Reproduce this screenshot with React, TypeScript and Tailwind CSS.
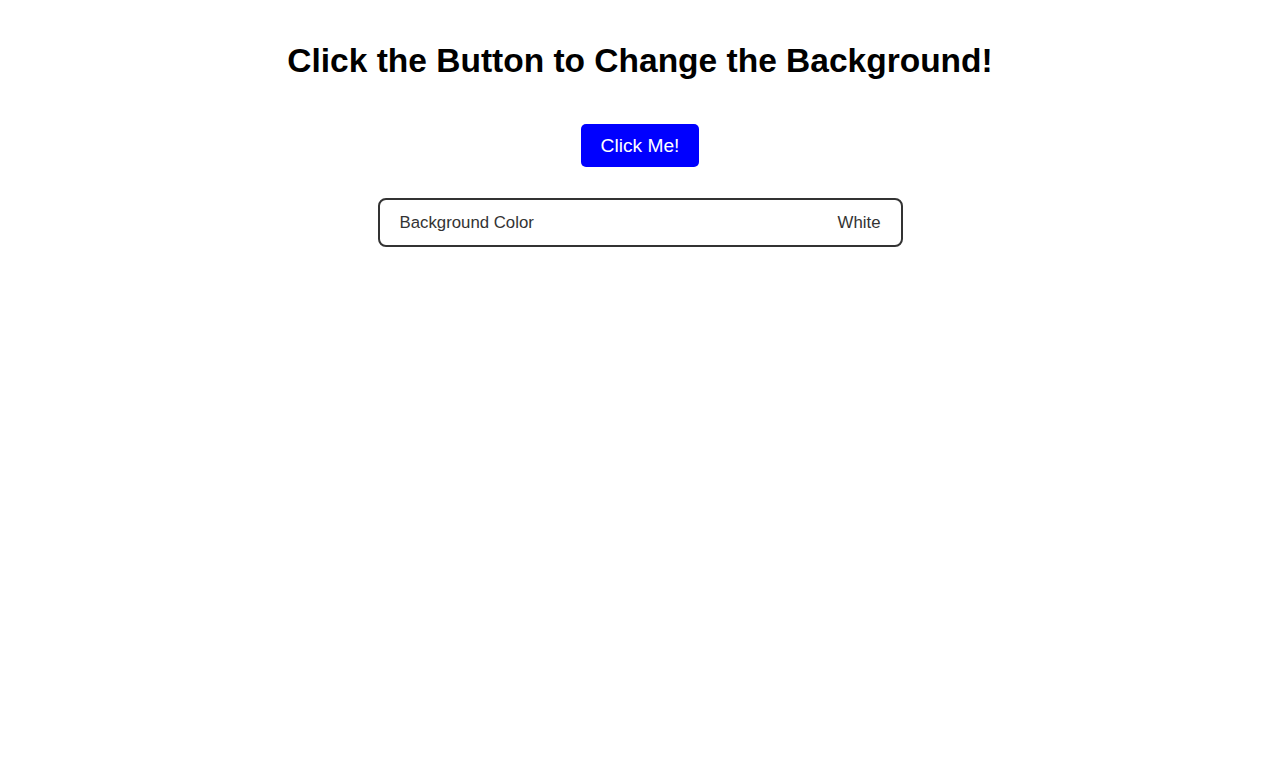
import { useState } from "react";

const COLORS = ["White", "LightBlue", "LightGreen", "LightPink", "LightYellow"];

export default function App() {
  const [index, setIndex] = useState(0);
  const color = COLORS[index];

  return (
    <div
      className="min-h-screen w-full pt-[42px] text-black"
      style={{ backgroundColor: color.toLowerCase(), fontFamily: '"Liberation Sans", Arial, sans-serif' }}
    >
      <div className="flex flex-col items-center">
        <h1 className="text-[33.5px] font-bold leading-[38px]">Click the Button to Change the Background!</h1>
        <button
          type="button"
          onClick={() => setIndex((i) => (i + 1) % COLORS.length)}
          className="mt-[44px] cursor-pointer rounded-[5px] bg-[#0000ff] px-5 py-[10px] text-[19.2px] leading-[23px] text-white"
        >
          Click Me!
        </button>
        <div className="mt-[31px] flex w-[525px] items-center justify-between rounded-lg border-2 border-[#333333] px-5 py-[11px] text-[16.8px] leading-[23px] text-[#333333]">
          <span>Background Color</span>
          <span>{color}</span>
        </div>
      </div>
    </div>
  );
}
